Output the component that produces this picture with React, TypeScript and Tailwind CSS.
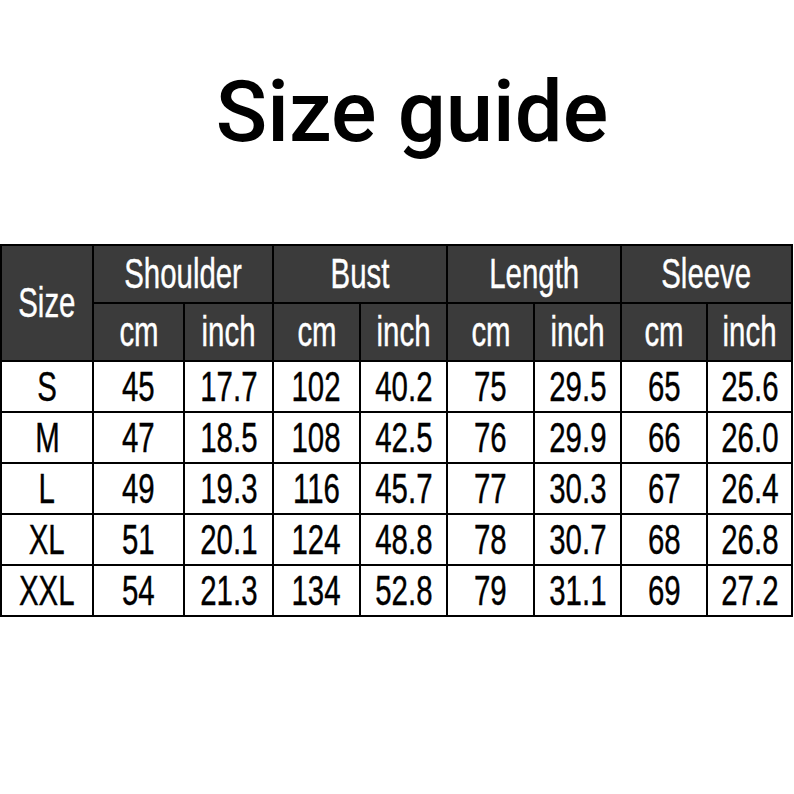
const cols = ['Shoulder', 'Bust', 'Length', 'Sleeve'];

const rows = [
  ['S', '45', '17.7', '102', '40.2', '75', '29.5', '65', '25.6'],
  ['M', '47', '18.5', '108', '42.5', '76', '29.9', '66', '26.0'],
  ['L', '49', '19.3', '116', '45.7', '77', '30.3', '67', '26.4'],
  ['XL', '51', '20.1', '124', '48.8', '78', '30.7', '68', '26.8'],
  ['XXL', '54', '21.3', '134', '52.8', '79', '31.1', '69', '27.2'],
];

// the table uses a condensed face; no narrow font is installed, so squeeze Liberation Sans
const Cell = ({ text, head }: { text: string; head?: boolean }) => (
  <div
    className={
      'flex items-center justify-center overflow-hidden ' +
      (head ? 'bg-[#3b3b3b] text-white' : 'bg-white text-black')
    }
  >
    <span className="inline-block scale-x-[0.7] whitespace-nowrap [-webkit-text-stroke:0.4px_currentColor]">
      {text}
    </span>
  </div>
);

const App = () => {
  return (
    <div className="w-[794px] h-[794px] bg-white overflow-hidden">
      <h1
        className="pt-[62px] pl-[30px] h-[244px] text-center text-[85px] leading-[100px] font-medium text-black"
        style={{ fontFamily: 'Roboto, "Liberation Sans", sans-serif' }}
      >
        Size guide
      </h1>

      <div
        className="w-[793px] grid grid-cols-[90px_89px_87px_85px_85px_85px_85px_84px_83px] grid-rows-[56px_56px_49px_49px_49px_49px_49px] gap-[2px] p-[2px] bg-black text-[42px] leading-none"
        style={{ fontFamily: '"Liberation Sans", Arial, sans-serif' }}
      >
        <div className="row-span-2 bg-[#3b3b3b] text-white flex items-center justify-center">
          <span className="inline-block scale-x-[0.7] [-webkit-text-stroke:0.4px_currentColor]">Size</span>
        </div>
        {cols.map((c) => (
          <div key={c} className="col-span-2 bg-[#3b3b3b] text-white flex items-center justify-center">
            <span className="inline-block scale-x-[0.7] [-webkit-text-stroke:0.4px_currentColor]">{c}</span>
          </div>
        ))}
        {cols.map((c) => [
          <Cell key={c + 'cm'} text="cm" head />,
          <Cell key={c + 'in'} text="inch" head />,
        ])}
        {rows.map((r) => r.map((v, i) => <Cell key={r[0] + i} text={v} />))}
      </div>
    </div>
  );
};

export default App;
